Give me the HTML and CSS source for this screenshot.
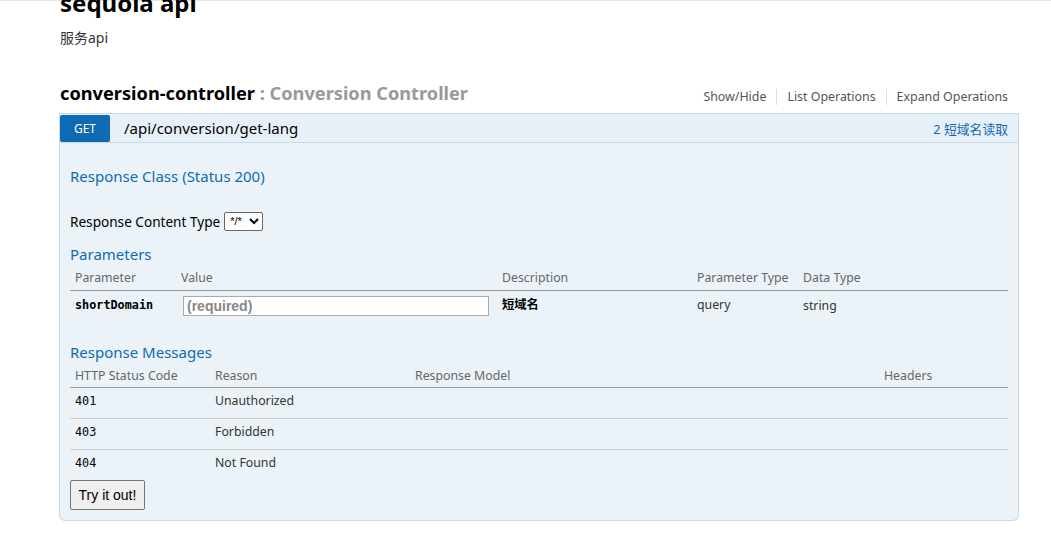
FILE: index.html
```html
<!DOCTYPE html>
<html>
<head>
<meta charset="utf-8">
<link rel="stylesheet" href="styles.css">
</head>
<body>
<div class="topline"></div>
<div class="page">
  <div class="info">
    <h1 class="title">sequoia api</h1>
    <div class="desc">服务api</div>
  </div>
  <div class="resource">
    <div class="res-head">
      <h2 class="res-title">conversion-controller<span class="res-sub"> : Conversion Controller</span></h2>
      <ul class="res-links">
        <li>Show/Hide</li>
        <li>List Operations</li>
        <li>Expand Operations</li>
      </ul>
    </div>
    <div class="op">
      <div class="op-heading">
        <span class="method">GET</span>
        <span class="path">/api/conversion/get-lang</span>
        <span class="summary">2 短域名读取</span>
      </div>
      <div class="op-content">
        <h4 class="sec first">Response Class (Status 200)</h4>
        <div class="ctype">
          <span>Response Content Type</span>
          <select class="sel"><option>*/*</option></select>
        </div>
        <h4 class="sec">Parameters</h4>
        <table class="tbl params">
          <colgroup><col class="c1"><col class="c2"><col class="c3"><col class="c4"><col class="c5"></colgroup>
          <thead><tr><th>Parameter</th><th>Value</th><th>Description</th><th>Parameter Type</th><th>Data Type</th></tr></thead>
          <tbody><tr>
            <td class="code bold">shortDomain</td>
            <td><input class="inp" type="text" placeholder="(required)"></td>
            <td class="strong">短域名</td>
            <td>query</td>
            <td class="dt">string</td>
          </tr></tbody>
        </table>
        <h4 class="sec rm">Response Messages</h4>
        <table class="tbl resp">
          <colgroup><col class="r1"><col class="r2"><col class="r3"><col class="r4"></colgroup>
          <thead><tr><th>HTTP Status Code</th><th>Reason</th><th>Response Model</th><th>Headers</th></tr></thead>
          <tbody>
            <tr><td class="code">401</td><td>Unauthorized</td><td></td><td></td></tr>
            <tr><td class="code">403</td><td>Forbidden</td><td></td><td></td></tr>
            <tr><td class="code">404</td><td>Not Found</td><td></td><td></td></tr>
          </tbody>
        </table>
        <button class="try">Try it out!</button>
      </div>
    </div>
  </div>
</div>
</body>
</html>
```

FILE: styles.css
```css
html, body {
  margin: 0;
  padding: 0;
  background: #fff;
  font-family: "Noto Sans", "Open Sans", "Noto Sans CJK SC", sans-serif;
  color: #333;
}
.topline {
  height: 1px;
  background: #e4e4e4;
}
.page {
  margin-left: 60px;
  width: 948px;
}
.title {
  margin: -13px 0 0 0;
  font-size: 24px;
  line-height: 30px;
  font-weight: 700;
  color: #000;
}
.desc {
  margin-top: 10px;
  font-size: 14px;
  line-height: 20px;
  color: #333;
}
.res-head {
  margin-top: 33px;
  display: flex;
  align-items: flex-end;
  justify-content: space-between;
}
.res-title {
  margin: 0;
  font-size: 18.2px;
  line-height: 24px;
  font-weight: 700;
  color: #000;
}
.res-sub {
  color: #999;
}
.res-links {
  list-style: none;
  margin: 0;
  padding: 0;
  display: flex;
  font-size: 12.4px;
  line-height: 16px;
  color: #555;
}
.res-links li {
  padding: 0 10px;
  border-left: 1px solid #ddd;
}
.res-links li:first-child {
  border-left: none;
}
.res-links li:last-child {
  padding-right: 0;
}
.op {
  margin-top: 8px;
  margin-left: -1px;
  width: 960px;
}
.op-heading {
  display: flex;
  align-items: center;
  height: 28px;
  background: #e7f0f7;
  border: 1px solid #c3d9ec;
}
.method {
  width: 50px;
  height: 27px;
  background: #0f6ab4;
  color: #fff;
  border-radius: 2px;
  font-size: 12px;
  display: flex;
  align-items: center;
  justify-content: center;
}
.path {
  margin-left: 14px;
  font-size: 15px;
  color: #000;
  flex: 1;
}
.summary {
  font-size: 12.8px;
  color: #0f6ab4;
  margin-right: 10px;
}
.op-content {
  background: #ebf3f9;
  border: 1px solid #c3d9ec;
  border-top: none;
  border-radius: 0 0 6px 6px;
  padding: 0 10px 10px 10px;
}
.sec {
  margin: 0;
  font-size: 15px;
  line-height: 20px;
  font-weight: 400;
  color: #0f6ab4;
}
.sec.first {
  padding-top: 23px;
}
.ctype {
  margin-top: 25px;
  display: flex;
  align-items: center;
  font-size: 13.6px;
  color: #000;
  height: 20px;
}
.sel {
  margin-left: 4px;
  width: 39px;
  height: 19px;
  font-size: 11px;
  font-family: "Liberation Sans", sans-serif;
  border: 1px solid #666;
  border-radius: 2px;
  background: #fff;
  padding: 0 1px;
}
.ctype + .sec {
  margin-top: 13px;
}
.tbl {
  width: 938px;
  border-collapse: collapse;
  table-layout: fixed;
  font-size: 12.3px;
}
.tbl th {
  text-align: left;
  font-weight: 400;
  color: #666;
  padding: 5px 5px 3px;
  border-bottom: 1px solid #999;
  line-height: 18px;
  white-space: nowrap;
}
.tbl td {
  padding: 0 5px;
  color: #333;
  line-height: 18px;
  vertical-align: top;
}
.params td {
  height: 24px;
  padding-top: 5px;
}
.resp th {
  padding: 5px 5px 2px;
}
.resp td {
  height: 26px;
  padding-top: 4px;
  border-top: 1px solid #ccc;
}
.resp tbody tr:first-child td {
  border-top: none;
}
.c1 { width: 106px; }
.c2 { width: 321px; }
.c3 { width: 195px; }
.c4 { width: 106px; }
.c5 { width: 210px; }
.r1 { width: 140px; }
.r2 { width: 200px; }
.r3 { width: 469px; }
.r4 { width: 129px; }
.code {
  font-family: "DejaVu Sans Mono", "Liberation Mono", monospace;
  font-size: 11.8px;
  color: #000 !important;
}
.bold {
  font-weight: 700;
}
.strong {
  font-weight: 700;
  color: #000 !important;
}
.params td.dt {
  padding-top: 6px;
}
.inp {
  box-sizing: border-box;
  width: 306px;
  height: 20px;
  border: 1px solid #aaa;
  background: #fff;
  font-size: 14px;
  font-family: "Liberation Sans", sans-serif;
  padding: 0 3px;
  margin: 0 0 0 2px;
  display: block;
}
.inp::placeholder {
  color: #888;
  font-weight: 700;
}
.sec.rm {
  margin-top: 21px;
}
.try {
  margin-top: 0;
  width: 75px;
  height: 30px;
  font-family: "Liberation Sans", sans-serif;
  font-size: 14px;
  color: #000;
  background: #efefef;
  border: 1px solid #767676;
  border-radius: 2px;
  padding: 0;
}
```
